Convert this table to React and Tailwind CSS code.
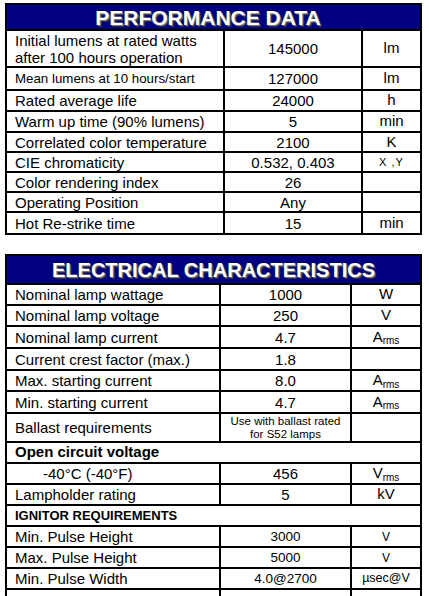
import React from "react";

const F = { fontFamily: '"Liberation Sans", Arial, sans-serif' };

function Cell({ w, className = "", children, first }) {
  return (
    <div
      className={`${w} h-full flex items-center ${first ? "" : "border-l-2 border-black justify-center"} ${className}`}
    >
      {children}
    </div>
  );
}

function Row({ h, cols, label, value, unit, labelCls = "text-[15px] pl-2", valueCls = "text-[15px]", unitCls = "text-[15px]" }) {
  return (
    <div className={`${h} flex border-t-2 border-black`}>
      <Cell w={cols[0]} first className={`${labelCls} leading-[17px]`}>{label}</Cell>
      <Cell w={cols[1]} className={`${valueCls} text-center leading-[13px]`}>{value}</Cell>
      <Cell w={cols[2]} className={unitCls}>{unit}</Cell>
    </div>
  );
}

function Full({ h, className, children }) {
  return (
    <div className={`${h} flex items-center border-t-2 border-black pl-2 ${className}`}>{children}</div>
  );
}

function Header({ h, className = "", children }) {
  return (
    <div
      className={`${h} bg-[#000080] flex items-center justify-center text-white font-bold leading-none [text-shadow:1px_1px_0_#777,2px_2px_1px_#333] ${className}`}
    >
      {children}
    </div>
  );
}

const Arms = () => (
  <span>
    A<sub className="text-[10px]">rms</sub>
  </span>
);
const Vrms = () => (
  <span>
    V<sub className="text-[10px]">rms</sub>
  </span>
);

export default function App() {
  const P = ["w-[216px]", "w-[138px]", "flex-1"];
  const E = ["w-[212px]", "w-[131px]", "flex-1"];
  return (
    <div className="w-[429px] h-[596px] overflow-hidden bg-white text-black pt-[3px]" style={F}>
      <div className="ml-[5px] w-[417px] border-2 border-black">
        <Header h="h-[24px]" className="text-[21px] pr-[11px]">PERFORMANCE DATA</Header>
        <Row h="h-[37px]" cols={P} label={<span>Initial lumens at rated watts<br />after 100 hours operation</span>} value="145000" unit="lm" />
        <Row h="h-[23px]" cols={P} labelCls="text-[13.3px] pl-2" label="Mean lumens at 10 hours/start" value="127000" unit="lm" />
        <Row h="h-[21px]" cols={P} label="Rated average life" value="24000" unit="h" />
        <Row h="h-[21px]" cols={P} label="Warm up time (90% lumens)" value="5" unit="min" />
        <Row h="h-[20px]" cols={P} label="Correlated color temperature" value="2100" unit="K" />
        <Row h="h-[20px]" cols={P} label="CIE chromaticity" value="0.532, 0.403" unit="X ,Y" unitCls="text-[11px] tracking-[1px]" />
        <Row h="h-[20px]" cols={P} label="Color rendering index" value="26" unit="" />
        <Row h="h-[20px]" cols={P} label="Operating Position" value="Any" unit="" />
        <Row h="h-[22px]" cols={P} label="Hot Re-strike time" value="15" unit="min" />
      </div>

      <div className="mt-[19px] ml-[5px] w-[417px] border-x-2 border-t-2 border-black">
        <Header h="h-[27px]" className="text-[20px]">ELECTRICAL CHARACTERISTICS</Header>
        <Row h="h-[21px]" cols={E} label="Nominal lamp wattage" value="1000" unit="W" />
        <Row h="h-[21px]" cols={E} label="Nominal lamp voltage" value="250" unit="V" />
        <Row h="h-[22px]" cols={E} label="Nominal lamp current" value="4.7" unit={<Arms />} />
        <Row h="h-[22px]" cols={E} label="Current crest factor (max.)" value="1.8" unit="" />
        <Row h="h-[21px]" cols={E} label="Max. starting current" value="8.0" unit={<Arms />} />
        <Row h="h-[22px]" cols={E} label="Min. starting current" value="4.7" unit={<Arms />} />
        <Row h="h-[29px]" cols={E} label="Ballast requirements" valueCls="text-[11.5px]" value={<span>Use with ballast rated<br />for S52 lamps</span>} unit="" />
        <Full h="h-[21px]" className="text-[15px] font-bold">Open circuit voltage</Full>
        <Row h="h-[21px]" cols={E} labelCls="text-[15px] pl-[36px]" label="-40°C (-40°F)" value="456" unit={<Vrms />} />
        <Row h="h-[21px]" cols={E} label="Lampholder rating" value="5" unit="kV" />
        <Full h="h-[21px]" className="text-[13px] font-bold">IGNITOR REQUIREMENTS</Full>
        <Row h="h-[21px]" cols={E} label="Min. Pulse Height" valueCls="text-[13.5px]" value="3000" unit="V" unitCls="text-[12px]" />
        <Row h="h-[21px]" cols={E} label="Max. Pulse Height" valueCls="text-[13.5px]" value="5000" unit="V" unitCls="text-[12px]" />
        <Row h="h-[21px]" cols={E} label="Min. Pulse Width" valueCls="text-[13.5px]" value="4.0@2700" unit="µsec@V" unitCls="text-[12.5px]" />
        <Row h="h-[21px]" cols={E} label="" value="" unit="" />
      </div>
    </div>
  );
}
